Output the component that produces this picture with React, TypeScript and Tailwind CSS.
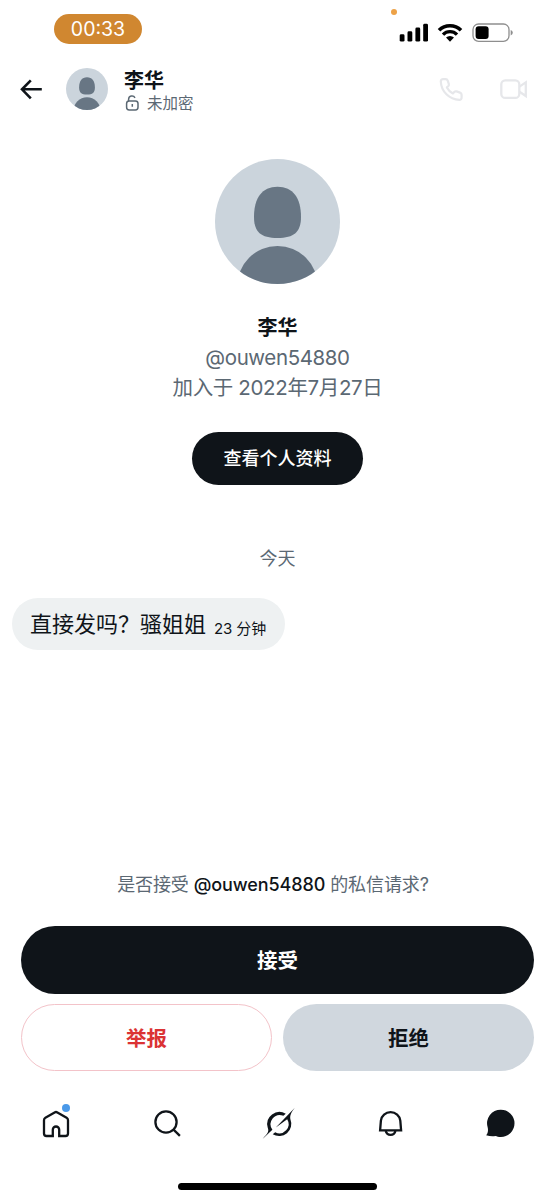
import type { ReactNode } from "react";

const FONT = "font-[Inter,'Noto_Sans_CJK_SC',sans-serif]";

function Avatar({ className }: { className: string }) {
  return (
    <svg viewBox="0 0 125 125" className={className}>
      <defs>
        <clipPath id="avatar-clip">
          <circle cx="62.5" cy="62.5" r="62.5" />
        </clipPath>
      </defs>
      <g clipPath="url(#avatar-clip)">
        <rect width="125" height="125" fill="#cbd4dc" />
        <path
          d="M62.5 27.7C78 27.7 86 39 86 58C86 73 79 79 62.5 79C46 79 39 73 39 58C39 39 47 27.7 62.5 27.7Z"
          fill="#687684"
        />
        <circle cx="62.5" cy="127.2" r="40.2" fill="#687684" />
      </g>
    </svg>
  );
}

function StatusBar() {
  return (
    <div className="relative flex h-[58px] items-start justify-between pl-[54px] pr-[42px]">
      <div className="mt-3.5 flex h-[30px] w-[88px] items-center justify-center rounded-full bg-[#d08730] pt-px text-[19.5px] text-white">
        00:33
      </div>
      <span className="absolute left-[391px] top-[9px] size-1.5 rounded-full bg-[#eda247]" />
      <div className="mt-[23px] flex items-start">
        <svg width="30" height="20" viewBox="0 0 30 20" className="mr-[8px]">
          <rect x="0.7" y="11.3" width="4.8" height="7.3" rx="1.4" />
          <rect x="8.5" y="8.3" width="4.8" height="10.3" rx="1.4" />
          <rect x="16.4" y="4.6" width="4.8" height="14" rx="1.4" />
          <rect x="24.2" y="0.8" width="4.8" height="17.8" rx="1.4" />
        </svg>
        <svg width="26" height="20" viewBox="0 0 26 20" className="mr-[9px]" fill="none" stroke="#000">
          <path d="M2 7.3A15.6 15.6 0 0 1 24 7.3" strokeWidth="3.6" />
          <path d="M6 11.6A9.7 9.7 0 0 1 20 11.6" strokeWidth="3.3" />
          <path d="M13 18.8L9 14.5A5.8 5.8 0 0 1 17 14.5Z" fill="#000" stroke="none" />
        </svg>
        <svg width="41" height="20" viewBox="0 0 41 20">
          <rect x="1" y="1" width="36" height="17.4" rx="5.6" fill="none" stroke="#8e8e8e" strokeWidth="1.3" />
          <rect x="3.6" y="3.3" width="13" height="12.8" rx="3" />
          <path d="M38.7 7V12.4Q40.8 11.6 40.8 9.7Q40.8 7.8 38.7 7Z" fill="#8e8e8e" />
        </svg>
      </div>
    </div>
  );
}

function Header() {
  return (
    <header className="flex h-[62px] items-center pl-5 pr-[27px]">
      <svg width="24" height="24" viewBox="0 0 24 24" fill="none" stroke="#0f1419" strokeWidth="2.6">
        <path d="M21.8 12.3H2.5M10.8 3.3L2 12.3L10.8 21.3" />
      </svg>
      <Avatar className="ml-[22px] size-[42px]" />
      <div className="ml-4 flex flex-col pt-[5px]">
        <h1 className="text-[20px] font-bold leading-6">李华</h1>
        <div className="flex items-center gap-[7px] text-[15.5px] leading-[22px] text-[#5b6873]">
          <svg width="16" height="17" viewBox="0 0 16 17" fill="none" stroke="currentColor" strokeWidth="1.5">
            <rect x="2.6" y="5.9" width="11.4" height="9" rx="2.6" />
            <path d="M4.6 5.9V4.3A3.4 3.4 0 0 1 11 2.8M8.3 9.1V11.7" />
          </svg>
          未加密
        </div>
      </div>
      <div className="ml-auto flex items-center gap-[34px] text-[#e6e7ea]">
        <svg width="26" height="26" viewBox="0 0 26 26" fill="none" stroke="currentColor" strokeWidth="2.2" strokeLinejoin="round">
          <path d="M5.2 3.1H7.6Q9.2 3.1 9.7 4.6L10.8 7.8Q11.2 9.2 10.2 10.2L8.9 11.4C10.2 14 12.2 16 14.9 17.4L16.2 16Q17.2 15 18.6 15.4L22 16.6Q23.6 17.2 23.6 18.8V21.4C23.6 23.1 22.7 24 21.3 23.9C11.3 23.6 3.2 15.5 2.8 5.5C2.8 4 3.6 3.1 5.2 3.1Z" />
        </svg>
        <svg width="30" height="24" viewBox="0 0 30 24" fill="none" stroke="currentColor" strokeWidth="2.3">
          <rect x="3.3" y="3.3" width="18" height="17.6" rx="4" />
          <path d="M21.5 9.6L27.8 5.4V19L21.5 14.8" />
        </svg>
      </div>
    </header>
  );
}

function NavItem({ children }: { children: ReactNode }) {
  return <button className="relative flex h-9 flex-1 items-center justify-center">{children}</button>;
}

function TabBar() {
  return (
    <nav className="mt-[35px] flex">
      <NavItem>
        <svg width="32" height="32" viewBox="0 0 32 32" fill="none" stroke="#0f1419" strokeWidth="2.3">
          <path d="M12.8 28H6.5A2.5 2.5 0 0 1 4 25.5V12.2Q4 10.6 5.4 9.8L14.6 4.4Q16 3.6 17.4 4.4L26.6 9.8Q28 10.6 28 12.2V25.5A2.5 2.5 0 0 1 25.5 28H19.2V21.7A3.2 3.2 0 0 0 12.8 21.7Z" />
        </svg>
        <span className="absolute left-[62px] top-[-2px] size-2 rounded-full bg-[#4a99e9]" />
      </NavItem>
      <NavItem>
        <svg width="32" height="32" viewBox="0 0 32 32" fill="none" stroke="#0f1419" strokeWidth="2.3">
          <circle cx="15" cy="14" r="10.6" />
          <path d="M22.3 21.4L28.9 27.8" />
        </svg>
      </NavItem>
      <NavItem>
        <svg width="36" height="36" viewBox="0 0 36 36" fill="#0f1419">
          <path d="M34.8 1.7L15.8 21.4L27.2 13.2A9.2 9.2 0 0 1 15.2 26.2L12.7 28.2A12.2 12.2 0 0 0 30.4 13.2C29.8 9.5 31 6.5 34.8 1.7Z" />
          <path d="M2.8 32.7C6.5 28.5 9.6 26.6 7.7 21.6A12.2 12.2 0 0 1 25.8 7.8L23.4 9.8A9.2 9.2 0 0 0 12.4 23.7Z" />
        </svg>
      </NavItem>
      <NavItem>
        <svg width="32" height="32" viewBox="0 0 32 32" fill="none" stroke="#0f1419" strokeWidth="2.3">
          <path d="M7.1 22.3L7.9 12.6A9.75 9.4 0 0 1 27.3 12.6L28.1 22.3Z" />
          <path d="M12.8 23A4.9 4.9 0 0 0 22.4 23" />
        </svg>
      </NavItem>
      <NavItem>
        <svg width="32" height="32" viewBox="0 0 32 32" fill="#0f1419">
          <path d="M16.9 1.7A13.6 13.6 0 1 1 16.9 28.9C14.5 28.9 12.9 28.3 11.4 27.9Q7.5 28.6 2.1 27.3C3.9 25.5 4.4 22.5 3.7 19.5A13.6 13.6 0 0 1 16.9 1.7Z" />
        </svg>
      </NavItem>
    </nav>
  );
}

export default function App() {
  return (
    <div className={`${FONT} flex h-[1200px] w-[555px] flex-col overflow-hidden bg-white text-[#0f1419]`} lang="zh-CN">
      <StatusBar />
      <Header />

      <section className="mt-[39px] flex flex-col items-center">
        <Avatar className="size-[125px]" />
        <h2 className="mt-[29px] text-[20px] font-bold leading-[30px]">李华</h2>
        <p className="text-[20.5px] leading-[30px] tracking-[-0.4px] text-[#5b6873]">@ouwen54880</p>
        <p className="text-[20.5px] leading-[30px] tracking-[-0.35px] text-[#5b6873]">加入于 2022年7月27日</p>
        <button className="mt-[29px] h-[53px] w-[171px] rounded-full bg-[#0f1419] text-[18px] font-medium text-white">
          查看个人资料
        </button>
      </section>

      <p className="mt-[62px] text-center text-[18px] leading-6 text-[#5b6873]">今天</p>

      <div className="ml-3 mt-[27px] flex h-[52px] w-[273px] items-center whitespace-nowrap rounded-full bg-[#eef1f2] pl-[18px]">
        <span className="text-[22px]">直接发吗？骚姐姐</span>
        <span className="ml-2 mt-2.5 text-[15px] tracking-[-0.1px]">23 分钟</span>
      </div>

      <p className="mt-[223px] pr-[9px] text-center text-[18px] leading-6 tracking-[-0.1px] text-[#5b6873]">
        是否接受 <span className="font-medium text-[#0f1419]">@ouwen54880</span> 的私信请求?
      </p>

      <div className="mt-[29px] grid grid-cols-2 gap-x-[11px] gap-y-[10px] px-[21px] text-[20.5px] font-bold">
        <button className="col-span-2 h-[68px] rounded-full bg-[#0f1419] pt-0.5 text-white">接受</button>
        <button className="h-[67px] rounded-full border border-[#f3c3c9] pt-1 text-[#db3334]">举报</button>
        <button className="h-[67px] rounded-full bg-[#d0d7de] pt-1">拒绝</button>
      </div>

      <TabBar />
      <div className="mx-auto mt-[41px] h-[6.5px] w-[199px] rounded-full bg-black" />
    </div>
  );
}
